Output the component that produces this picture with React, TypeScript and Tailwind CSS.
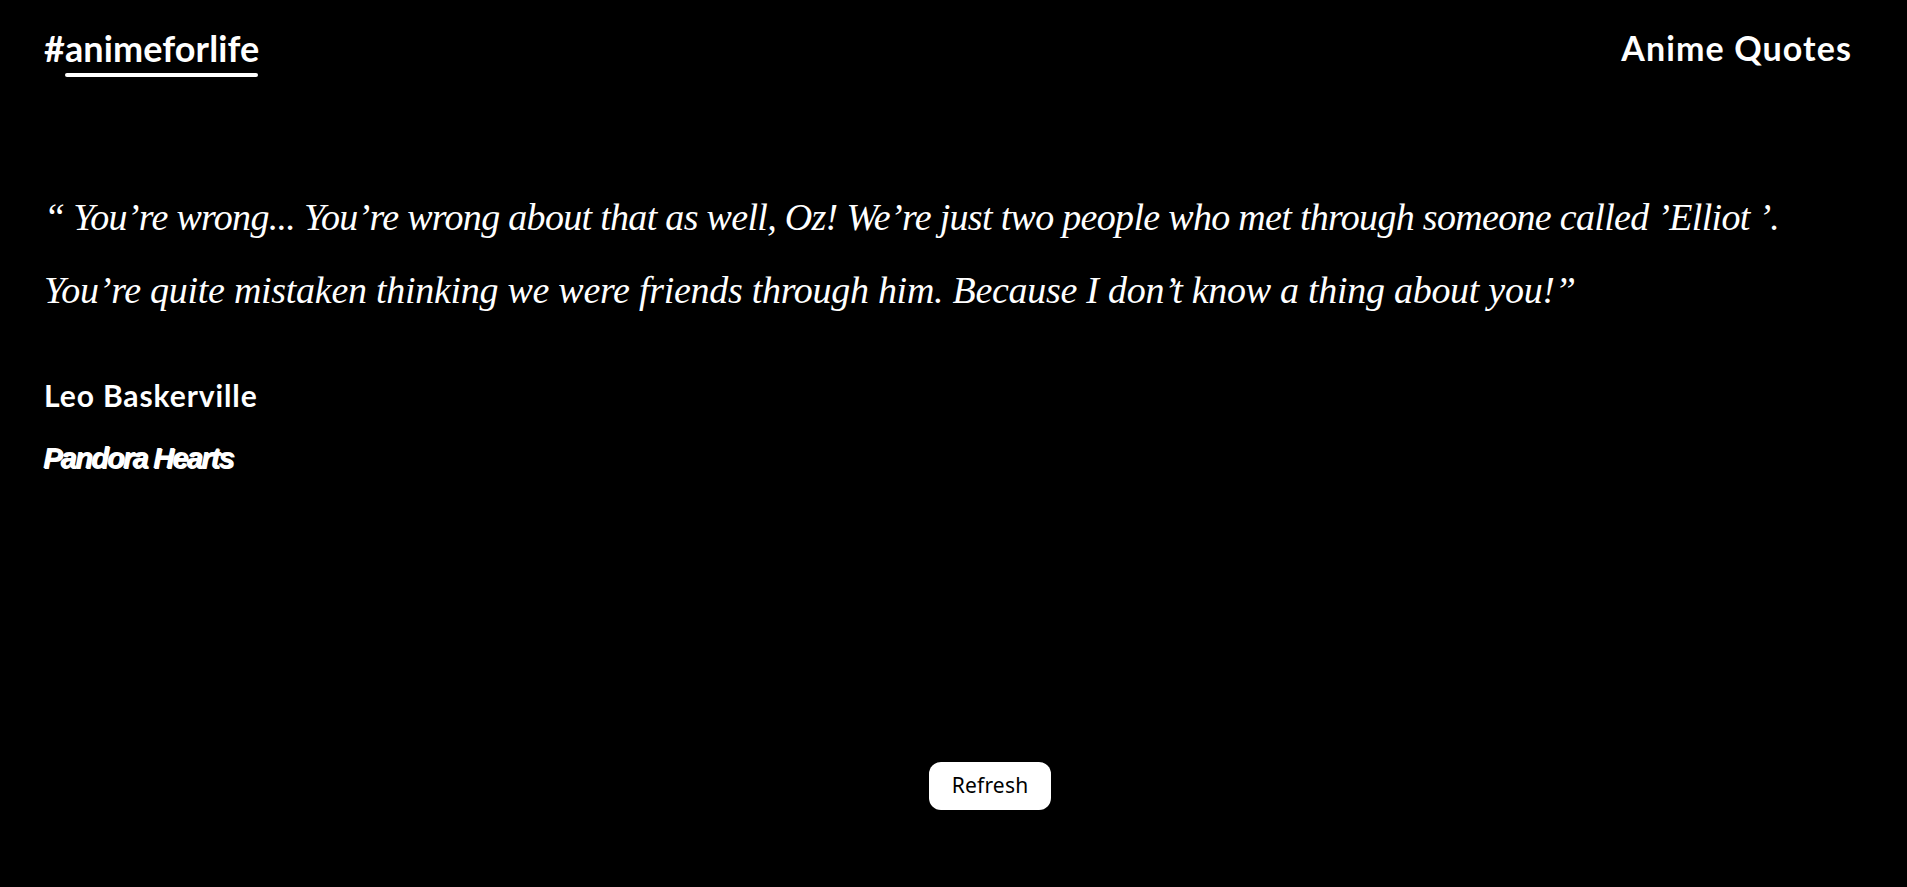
import React from 'react';

const headingFont = "font-['Lato',sans-serif] font-bold";

export default function App() {
  return (
    <div className="min-h-[887px] bg-black text-white flex flex-col">
      {/* Header */}
      <header className="flex items-start justify-between pl-[44px] pr-[55px] pt-[26px]">
        <div className="flex flex-col items-end">
          <h1 className={`${headingFont} text-[36px] leading-[44px] tracking-[0.1px]`}>#animeforlife</h1>
          <div className="h-[4px] w-[193px] mr-[1px] mt-[3px] rounded-full bg-white" />
        </div>
        <p className={`${headingFont} text-[34px] leading-[44px] tracking-[1.1px]`}>Anime Quotes</p>
      </header>

      {/* Quote */}
      <main className="flex-1 px-[44px] pt-[104px]">
        <blockquote className="font-['Liberation_Serif',serif] italic text-[38px] leading-[73px] whitespace-nowrap">
          <span className="block tracking-[-0.69px]">“ You’re wrong... You’re wrong about that as well, Oz! We’re just two people who met through someone called ’Elliot ’.</span>
          <span className="block tracking-[-0.28px]">You’re quite mistaken thinking we were friends through him. Because I don’t know a thing about you!”</span>
        </blockquote>
        <p className={`${headingFont} mt-[46px] text-[30px] leading-[44px] tracking-[0.9px]`}>Leo Baskerville</p>
        <p className="font-['Liberation_Sans',sans-serif] font-bold italic mt-[20px] text-[29px] leading-[44px] tracking-[-1.75px] [text-shadow:-1px_-1px_0_#ffffff]">Pandora Hearts</p>
      </main>

      {/* Refresh */}
      <div className="flex justify-center pb-[77px] pl-[73px]">
        <button className="w-[122px] h-[48px] rounded-[12px] bg-white text-black font-['Noto_Sans',sans-serif] text-[21px] tracking-[0.2px]">
          Refresh
        </button>
      </div>
    </div>
  );
}
